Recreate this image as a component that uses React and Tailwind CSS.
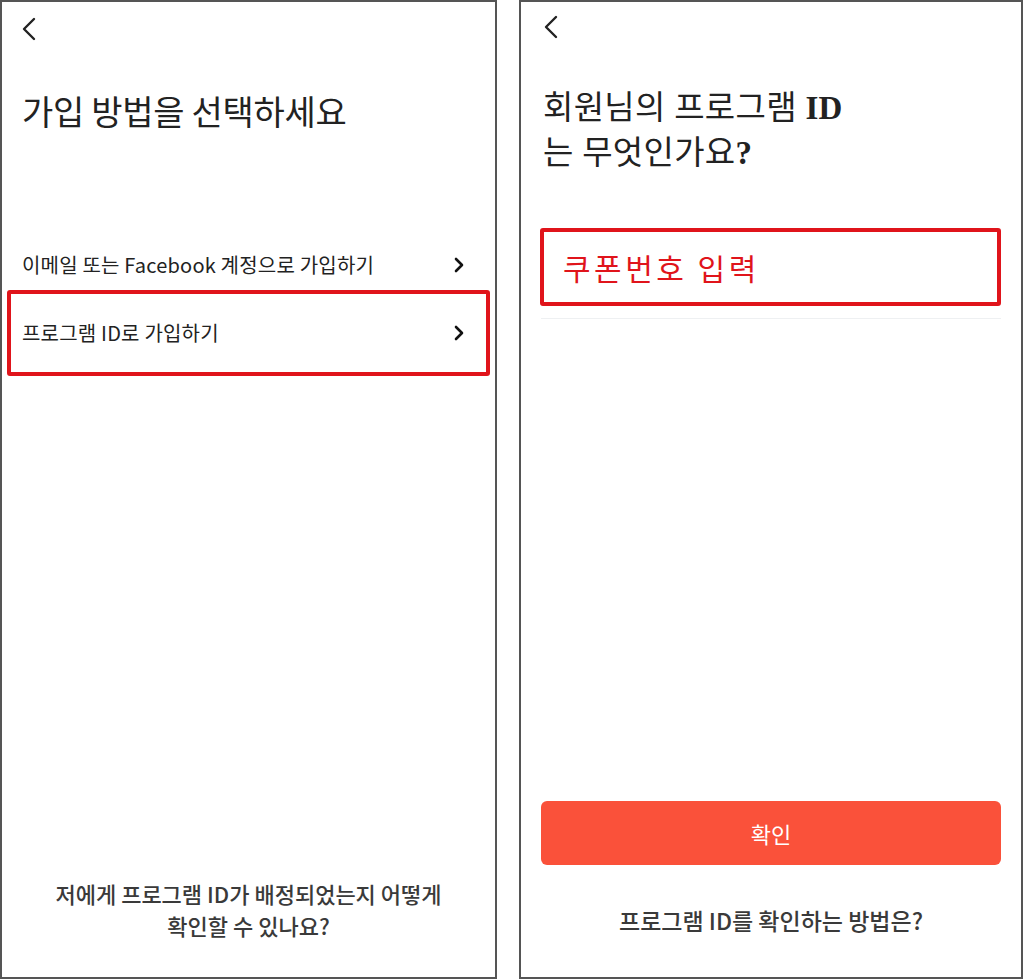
import React from 'react';

const KR = { fontFamily: '"Noto Sans CJK KR", "Noto Sans", sans-serif' };

function BackIcon() {
  return (
    <svg width="16" height="26" viewBox="0 0 16 26" fill="none">
      <path d="M13 3 L3 13 L13 23" stroke="#222" strokeWidth="2.4" strokeLinecap="round" strokeLinejoin="round" />
    </svg>
  );
}

function Chevron() {
  return (
    <svg width="12" height="16" viewBox="0 0 12 16" fill="none">
      <path d="M3 2 L9 8 L3 14" stroke="#111" strokeWidth="2.6" strokeLinecap="round" strokeLinejoin="round" />
    </svg>
  );
}

export default function App() {
  return (
    <div className="w-[1024px] h-[980px] bg-white flex gap-[22px]" style={KR}>
      {/* Left phone */}
      <div className="w-[497px] h-[979px] border-2 border-[#555] flex flex-col text-[#222]">
        <div className="pl-[19px] pt-[14px] h-[50px]">
          <BackIcon />
        </div>
        <h1 className="mt-[37px] pl-5 text-[34px] leading-[44px] font-normal tracking-[-0.3px]">가입 방법을 선택하세요</h1>

        <div className="mt-[107px] mx-[5px]">
          <div className="h-[50px] flex items-center justify-between pl-[15px] pr-[25px]">
            <span className="text-[20px] tracking-[0.2px]">이메일 또는 Facebook 계정으로 가입하기</span>
            <Chevron />
          </div>
          <div className="h-[86px] border-4 border-[#e0141b] rounded-[3px] flex items-center justify-between pl-[11px] pr-[21px]">
            <span className="text-[20px] tracking-[0.2px]">프로그램 ID로 가입하기</span>
            <Chevron />
          </div>
        </div>

        <div className="mt-auto pb-[36px] text-center text-[22px] leading-[32px] font-medium text-[#3a3a3a]">
          <p>저에게 프로그램 ID가 배정되었는지 어떻게</p>
          <p>확인할 수 있나요?</p>
        </div>
      </div>

      {/* Right phone */}
      <div className="w-[504px] h-[979px] border-2 border-[#555] flex flex-col px-5 text-[#222]">
        <div className="pl-[2px] pt-[12px] h-[50px]">
          <BackIcon />
        </div>
        <h1
          className="mt-[34px] pl-[2px] text-[33px] leading-[45px] font-normal tracking-[0.3px]"
          style={{ fontFamily: '"Liberation Serif", "Noto Sans CJK KR", serif' }}
        >
          회원님의 프로그램 <span className="font-bold">ID</span>
          <br />는 무엇인가요<span className="font-bold">?</span>
        </h1>

        <div className="mt-[52px] h-[78px] border-4 border-[#e0141b] rounded-[3px] flex items-center pl-[19px] -ml-[1px]">
          <span className="text-[30px] text-[#e0141b] tracking-[3.5px]">쿠폰번호 입력</span>
        </div>
        <div className="mt-[12px] h-px bg-[#eef0f2]" />

        <button className="mt-auto h-[64px] w-full rounded-[6px] bg-[#fa513a] text-white text-[22px]">확인</button>

        <p className="mt-[38px] mb-[40px] text-center text-[23px] leading-[34px] font-medium text-[#3a3a3a]">
          프로그램 ID를 확인하는 방법은?
        </p>
      </div>
    </div>
  );
}
